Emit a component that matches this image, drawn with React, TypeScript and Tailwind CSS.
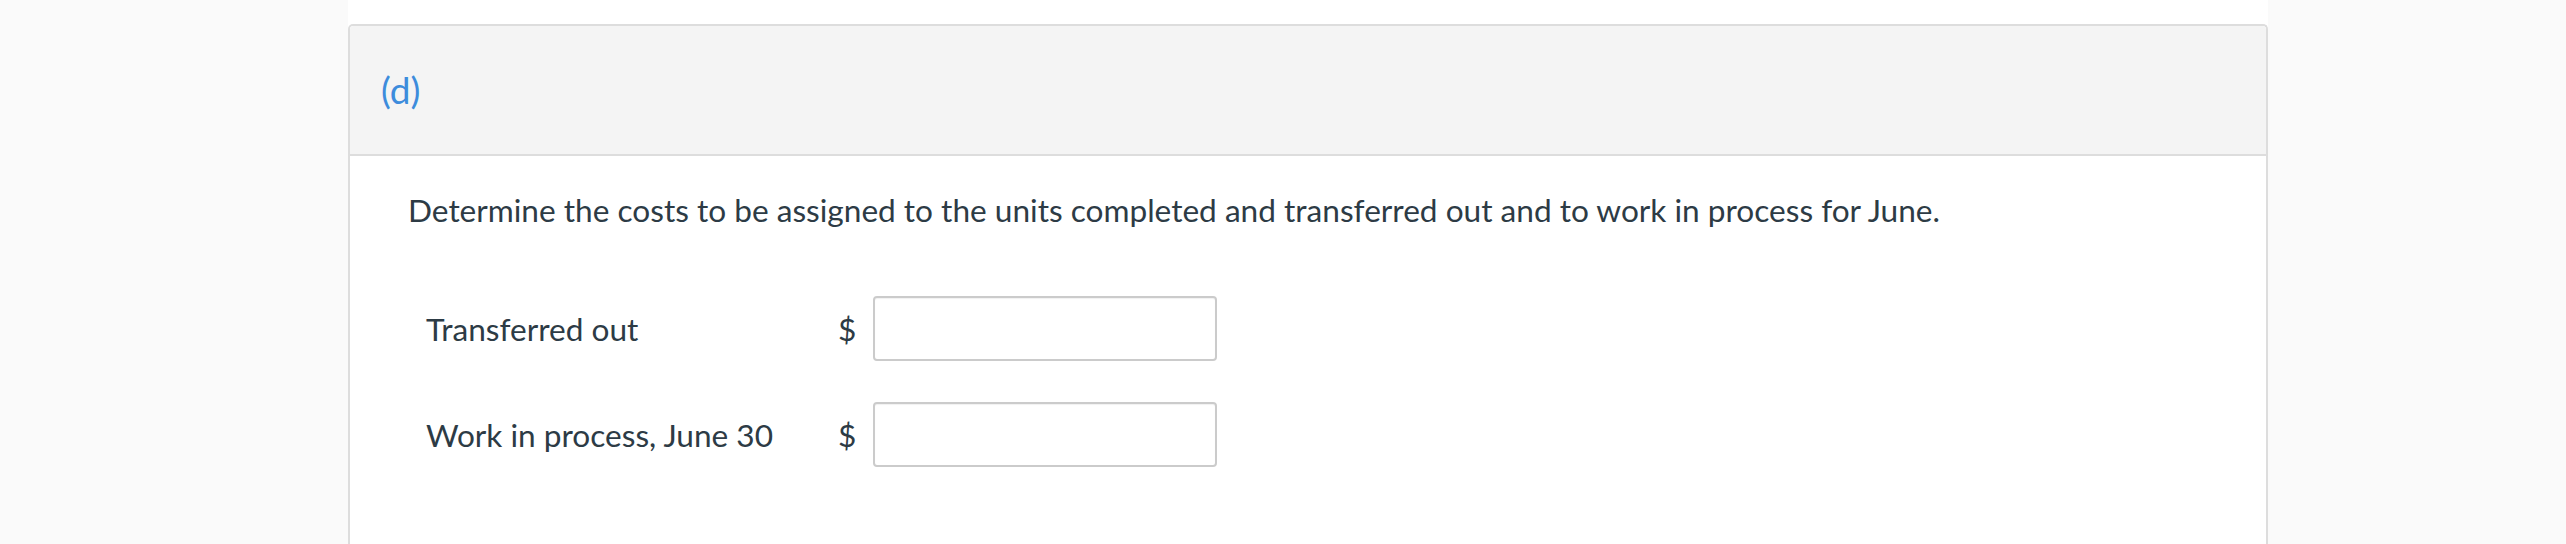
import React from "react";

const font = { fontFamily: "Lato, 'Noto Sans', sans-serif" };

function Row({ label }: { label: string }) {
  return (
    <div className="flex items-center">
      <div className="w-[488px] shrink-0 pl-[76px] leading-[48px] whitespace-nowrap">{label}</div>
      <div className="w-[35px] shrink-0 leading-[48px]">$</div>
      <div className="w-[344px] h-[65px] shrink-0 border-2 border-[#cbcbcb] rounded-[4px] bg-white shadow-[inset_0_1px_1px_rgba(0,0,0,0.06)]" />
    </div>
  );
}

export default function App() {
  return (
    <div className="w-[2566px] h-[544px] flex bg-[#fafafa] overflow-hidden" style={font}>
      <div className="w-[348px] shrink-0" />
      <div className="w-[1920px] shrink-0 bg-white pt-[24px]">
        <div className="h-[560px] border-2 border-b-0 border-[#dddddd] rounded-t-[5px] text-[31.6px] text-[#2d3b45]">
          <div className="bg-[#f4f4f4] border-b-2 border-[#dddddd] pl-[31px] pt-[40px] pb-[40px] leading-[48px] text-[37px] text-[#3d8cdc] rounded-t-[4px]">
            (d)
          </div>
          <div className="pt-[30px]">
            <p className="pl-[58px] leading-[48px] whitespace-nowrap">
              Determine the costs to be assigned to the units completed and transferred out and to work in process for June.
            </p>
            <div className="mt-[62px] flex flex-col gap-[41px]">
              <Row label="Transferred out" />
              <Row label="Work in process, June 30" />
            </div>
          </div>
        </div>
      </div>
      <div className="flex-1" />
    </div>
  );
}
